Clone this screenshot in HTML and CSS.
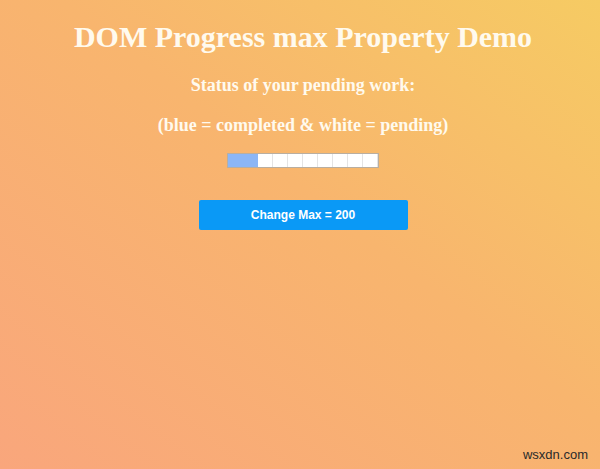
FILE: index.html
```html
<!DOCTYPE html>
<html>
<head>
<meta charset="utf-8">
<link rel="stylesheet" href="styles.css">
</head>
<body>
<div class="page">
  <h1 class="title">DOM Progress max Property Demo</h1>
  <h3 class="sub">Status of your pending work:</h3>
  <h3 class="sub sub2">(blue = completed &amp; white = pending)</h3>
  <div class="meter"><div class="meter-fill" style="width:30px"></div></div>
  <button class="btn">Change Max = 200</button>
</div>
<div class="mark">wsxdn.com</div>
</body>
</html>
```
FILE: styles.css
```css
html, body {
  margin: 0;
  padding: 0;
  height: 100%;
}
body {
  background: linear-gradient(to bottom left, #f6cb63 0%, #f8b56e 45%, #f9a67c 100%);
  font-family: "Liberation Serif", "Times New Roman", serif;
  overflow: hidden;
  position: relative;
}
.page {
  display: flex;
  flex-direction: column;
  align-items: center;
  padding-top: 20px;
  padding-left: 6px;
}
.title {
  margin: 0;
  font-size: 30px;
  font-weight: bold;
  color: #fffaee;
  line-height: 34px;
}
.sub {
  margin: 0;
  margin-top: 21px;
  font-size: 18px;
  font-weight: bold;
  color: #fffaee;
  line-height: 20px;
}
.sub2 {
  margin-top: 20px;
}
.meter {
  margin-top: 18px;
  width: 150px;
  height: 13px;
  border: 1px solid #b9aea0;
  background-color: #ffffff;
  background-image: repeating-linear-gradient(to right, transparent 0, transparent 14px, #e4e4e4 14px, #e4e4e4 15px);
  position: relative;
}
.meter-fill {
  height: 100%;
  background: #8cb6f6;
}
.btn {
  margin-top: 32px;
  width: 209px;
  height: 30px;
  border: none;
  border-radius: 2px;
  background: #0a99f6;
  color: #ffffff;
  font-family: "Liberation Sans", Arial, sans-serif;
  font-weight: bold;
  font-size: 12px;
  padding: 0;
}
.mark {
  position: absolute;
  right: 12px;
  bottom: 7px;
  font-family: "Liberation Sans", Arial, sans-serif;
  font-size: 13px;
  color: #2a2a2a;
}
```
